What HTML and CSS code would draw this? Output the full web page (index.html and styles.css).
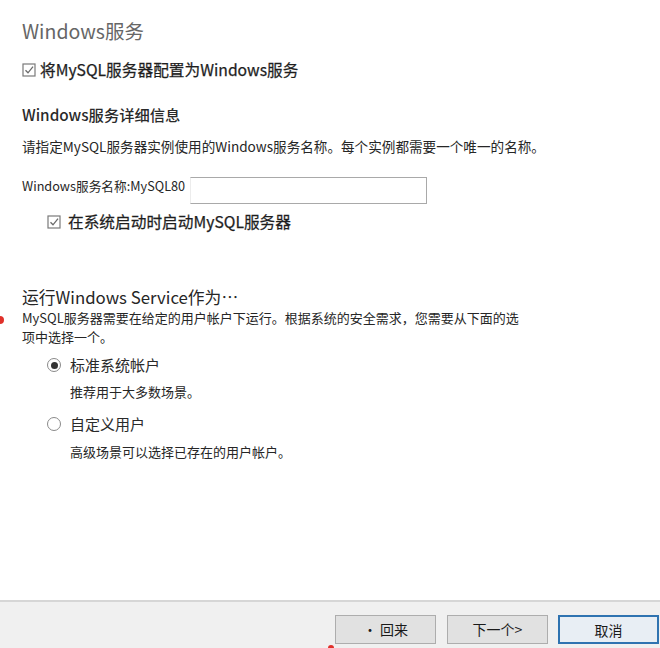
FILE: index.html
```html
<!DOCTYPE html>
<html lang="zh-CN">
<head>
<meta charset="utf-8">
<title>Windows服务</title>
<link rel="stylesheet" href="styles.css">
</head>
<body>
<div class="page">
  <main class="content">
    <h1 class="title">Windows服务</h1>
    <div class="check-row top-check">
      <svg class="checkbox" viewBox="0 0 14 14" width="14" height="14"><rect x="1" y="1" width="12" height="12" fill="none" stroke="#7a7a7a" stroke-width="1.2"/><path d="M3.5 7.2 L6 9.8 L11 3.6" fill="none" stroke="#6a6a6a" stroke-width="1.3"/></svg>
      <span class="check-label">将MySQL服务器配置为Windows服务</span>
    </div>
    <h2 class="subhead">Windows服务详细信息</h2>
    <p class="desc">请指定MySQL服务器实例使用的Windows服务名称。每个实例都需要一个唯一的名称。</p>
    <div class="name-row">
      <span class="name-label">Windows服务名称:MySQL80</span>
      <div class="name-input"></div>
    </div>
    <div class="check-row indent-check">
      <svg class="checkbox" viewBox="0 0 14 14" width="14" height="14"><rect x="1" y="1" width="12" height="12" fill="none" stroke="#7a7a7a" stroke-width="1.2"/><path d="M3.5 7.2 L6 9.8 L11 3.6" fill="none" stroke="#6a6a6a" stroke-width="1.3"/></svg>
      <span class="check-label">在系统启动时启动MySQL服务器</span>
    </div>
    <h2 class="run-head">运行Windows Service作为…</h2>
    <p class="para">MySQL服务器需要在给定的用户帐户下运行。根据系统的安全需求，您需要从下面的选<br>项中选择一个。</p>
    <div class="radio-row first-radio">
      <span class="radio checked"></span>
      <span class="radio-label">标准系统帐户</span>
    </div>
    <p class="radio-sub sub-one">推荐用于大多数场景。</p>
    <div class="radio-row second-radio">
      <span class="radio"></span>
      <span class="radio-label">自定义用户</span>
    </div>
    <p class="radio-sub sub-two">高级场景可以选择已存在的用户帐户。</p>
  </main>
  <footer class="footer">
    <button class="btn back">· 回来</button>
    <button class="btn next">下一个&gt;</button>
    <button class="btn cancel">取消</button>
  </footer>
  <span class="marker marker-left"></span>
  <span class="marker marker-bottom"></span>
</div>
</body>
</html>
```
FILE: styles.css
```css
html, body {
  margin: 0;
  padding: 0;
  background: #ffffff;
}
body {
  font-family: "Noto Sans CJK SC", "Noto Sans", sans-serif;
  color: #262626;
}
.page {
  position: relative;
  width: 660px;
  height: 648px;
  display: flex;
  flex-direction: column;
  overflow: hidden;
}
.content {
  flex: 1;
  padding: 19px 0 0 22px;
}
.title {
  margin: 0;
  font-size: 19.5px;
  font-weight: 400;
  line-height: 24px;
  color: #666666;
}
.check-row {
  display: flex;
  align-items: center;
  height: 20px;
}
.checkbox {
  flex: none;
  width: 14px;
  height: 14px;
}
.check-label {
  font-size: 15.7px;
  line-height: 20px;
  font-weight: 400;
  color: #1e1e1e;
  -webkit-text-stroke: 0.25px #1e1e1e;
}
.top-check {
  margin-top: 17px;
}
.top-check .checkbox {
  margin-right: 4px;
}
.subhead {
  margin: 24px 0 0;
  font-size: 15.3px;
  font-weight: 500;
  line-height: 20px;
  color: #2a2a2a;
}
.desc {
  margin: 13px 0 0;
  font-size: 13.6px;
  line-height: 18px;
  color: #262626;
}
.name-row {
  display: flex;
  align-items: flex-start;
  margin-top: 22px;
  height: 27px;
}
.name-label {
  flex: none;
  width: 168px;
  white-space: nowrap;
  font-size: 12.7px;
  line-height: 18px;
  color: #262626;
}
.name-input {
  flex: none;
  width: 235px;
  height: 25px;
  border: 1px solid #a9a9a9;
  border-left-color: #ececec;
  background: #ffffff;
}
.indent-check {
  margin-top: 8px;
  padding-left: 25px;
}
.indent-check .checkbox {
  margin-right: 7px;
}
.run-head {
  margin: 54px 0 0;
  font-size: 16.8px;
  font-weight: 400;
  line-height: 22px;
  color: #262626;
}
.para {
  margin: 0;
  font-size: 13px;
  line-height: 19px;
  color: #262626;
}
.radio-row {
  display: flex;
  align-items: center;
  height: 20px;
  padding-left: 25px;
}
.first-radio {
  margin-top: 9px;
}
.second-radio {
  margin-top: 13px;
}
.radio {
  box-sizing: border-box;
  width: 14px;
  height: 14px;
  border: 1.5px solid #8a8a8a;
  border-radius: 50%;
  margin-right: 9px;
  position: relative;
  background: #ffffff;
}
.radio.checked::after {
  content: "";
  position: absolute;
  left: 50%;
  top: 50%;
  width: 7px;
  height: 7px;
  margin: -3.5px 0 0 -3.5px;
  border-radius: 50%;
  background: #333333;
}
.radio-label {
  font-size: 15px;
  line-height: 20px;
  color: #2a2a2a;
}
.radio-sub {
  margin: 0;
  padding-left: 48px;
  font-size: 13px;
  line-height: 18px;
  color: #262626;
}
.sub-one {
  margin-top: 8px;
}
.sub-two {
  margin-top: 9px;
}
.footer {
  flex: none;
  height: 48px;
  box-sizing: border-box;
  border-top: 2px solid #d6d6d6;
  background: #f0f0f0;
  display: flex;
  align-items: flex-start;
  justify-content: flex-end;
  padding-top: 13px;
  padding-right: 1px;
}
.btn {
  box-sizing: border-box;
  width: 101px;
  height: 29px;
  border: 1px solid #adadad;
  background: #e1e1e1;
  font-family: "Noto Sans CJK SC", sans-serif;
  font-size: 14px;
  color: #1a1a1a;
  padding: 0;
  line-height: 27px;
}
.back {
  margin-right: 11px;
}
.next {
  margin-right: 10px;
}
.cancel {
  border: 2px solid #2f73b0;
  background: #e8eef4;
}
.marker {
  position: absolute;
  border-radius: 50%;
  background: #e0302a;
}
.marker-left {
  left: -4px;
  top: 316px;
  width: 8px;
  height: 8px;
}
.marker-bottom {
  left: 328px;
  top: 645px;
  width: 6px;
  height: 6px;
}
```
